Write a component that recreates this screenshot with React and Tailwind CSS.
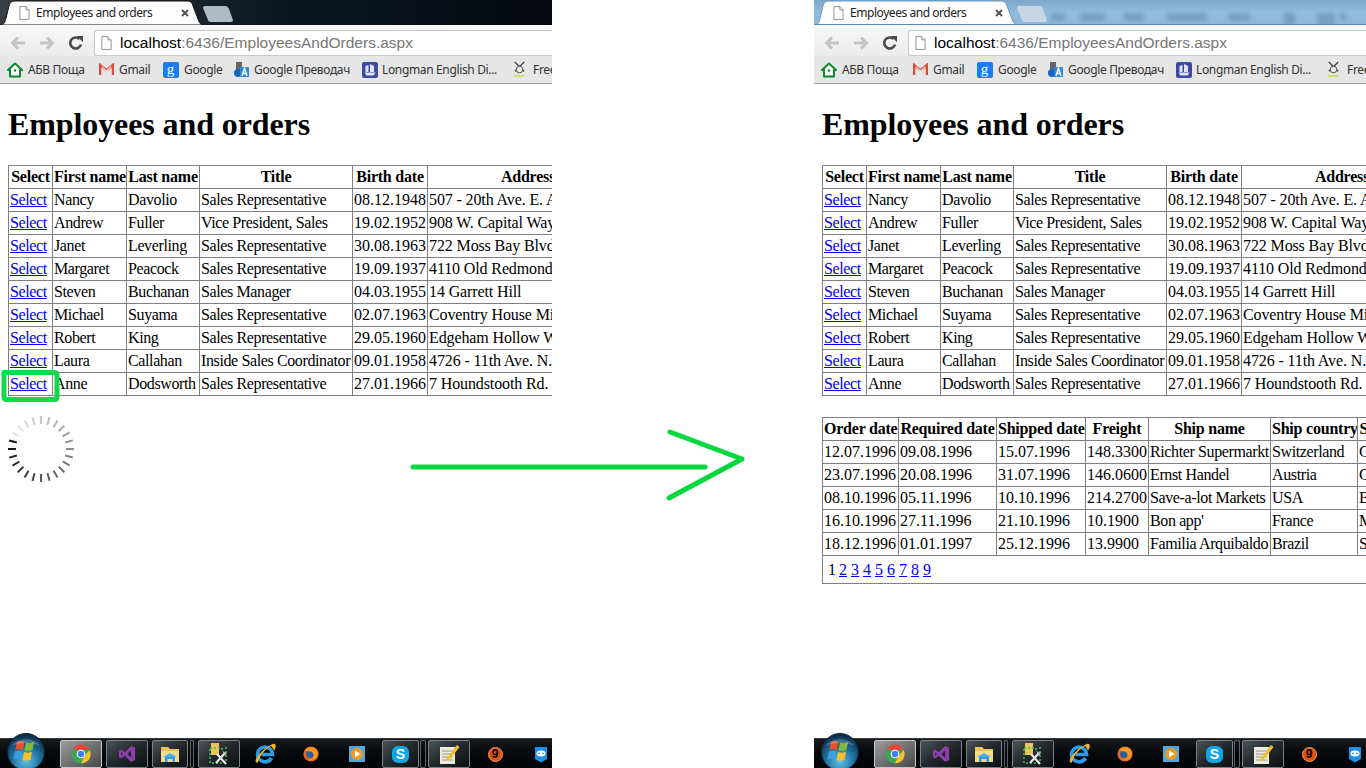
import React from "react";

const employees = [
  ["Nancy","Davolio","Sales Representative","08.12.1948","507 - 20th Ave. E. Apt. 2A"],
  ["Andrew","Fuller","Vice President, Sales","19.02.1952","908 W. Capital Way"],
  ["Janet","Leverling","Sales Representative","30.08.1963","722 Moss Bay Blvd."],
  ["Margaret","Peacock","Sales Representative","19.09.1937","4110 Old Redmond Rd."],
  ["Steven","Buchanan","Sales Manager","04.03.1955","14 Garrett Hill"],
  ["Michael","Suyama","Sales Representative","02.07.1963","Coventry House Miner Rd."],
  ["Robert","King","Sales Representative","29.05.1960","Edgeham Hollow Winchester Way"],
  ["Laura","Callahan","Inside Sales Coordinator","09.01.1958","4726 - 11th Ave. N.E."],
  ["Anne","Dodsworth","Sales Representative","27.01.1966","7 Houndstooth Rd."],
];

const orders = [
  ["12.07.1996","09.08.1996","15.07.1996","148.3300","Richter Supermarkt","Switzerland","Genève"],
  ["23.07.1996","20.08.1996","31.07.1996","146.0600","Ernst Handel","Austria","Graz"],
  ["08.10.1996","05.11.1996","10.10.1996","214.2700","Save-a-lot Markets","USA","Boise"],
  ["16.10.1996","27.11.1996","21.10.1996","10.1900","Bon app'","France","Marseille"],
  ["18.12.1996","01.01.1997","25.12.1996","13.9900","Familia Arquibaldo","Brazil","Sao Paulo"],
];

const thc = "border border-[#808080] px-px py-0 font-bold text-center whitespace-nowrap overflow-hidden h-[23px] tracking-[-0.22px]";
const tdc = "border border-[#808080] px-px py-0 text-left whitespace-nowrap overflow-hidden h-[23px] tracking-[-0.38px]";
const tda = "border border-[#808080] px-px py-0 text-left whitespace-nowrap overflow-hidden h-[23px] tracking-[-0.12px]";
const tdn = "border border-[#808080] px-px py-0 text-left whitespace-nowrap overflow-hidden h-[23px]";
const isNum = (s) => /^[\d.]+$/.test(s);

function DocIcon({ className }) {
  return (
    <svg viewBox="0 0 12 15" className={className}>
      <path d="M1 .5h6.5L11 4v10.5H1z" fill="#fff" stroke="#8a8a8a" />
      <path d="M7.5.5V4H11" fill="#eee" stroke="#8a8a8a" />
    </svg>
  );
}

function Tab({ blue }) {
  return (
    <div className="relative w-[204px] h-[25px] shrink-0">
      <svg viewBox="0 0 204 25" className="absolute inset-0 w-[204px] h-[25px]">
        <path d="M0 25C4 25 5 22 6 18L9 6C10 2 12 1 16 1H186C190 1 192 2 193 6L198 19C199 23 201 25 204 25Z" fill="#fdfdfd" stroke={blue ? "#6f94b3" : "#111"} strokeWidth="1" />
      </svg>
      <div className="relative flex items-center h-[25px] pl-[19px]">
        <DocIcon className="w-[11px] h-[14px]" />
        <span className="ml-[6px] text-[12px] tracking-[-0.45px] text-[#222] font-['Noto_Sans',sans-serif] whitespace-nowrap">Employees and orders</span>
        <svg viewBox="0 0 8 8" className="absolute left-[181px] top-[9px] w-[8px] h-[8px]">
          <path d="M1 1l6 6M7 1l-6 6" stroke="#555" strokeWidth="2" />
        </svg>
      </div>
    </div>
  );
}

function NewTab({ blue }) {
  return (
    <svg viewBox="0 0 30 16" className="w-[30px] h-[16px] mt-[6px] ml-[-1px] shrink-0">
      <path d="M2 0H22C24 0 25 1 26 3L30 14C30 15 29 16 28 16H8C6 16 5 15 5 14L0 2C0 1 1 0 2 0Z" fill={blue ? "#c7d6e4" : "#aebac6"} />
    </svg>
  );
}

function Strip({ blue }) {
  if (blue) {
    const blobs = [
      ["w-[14px]", "ml-[4px]"], ["w-[25px]", "ml-[15px]"], ["w-[20px]", "ml-[19px]"],
      ["w-[40px]", "ml-[23px]"], ["w-[21px]", "ml-[22px]"], ["w-[11px] h-[12px]", "ml-[34px]"],
      ["w-[18px] h-[14px]", "ml-[22px]"], ["w-[6px]", "ml-[5px]"],
    ];
    return (
      <div className="flex h-[25px] items-start bg-gradient-to-b from-[#7ba7c9] via-[#92bcdd] to-[#8db8da] border-b border-[#5f89ab] overflow-hidden">
        <Tab blue />
        <NewTab blue />
        {blobs.map(([w, m], i) => (
          <div key={i} className={`${w} ${m} h-[8px] mt-[13px] bg-[#4f7a9c] opacity-40 blur-[2px] shrink-0`} />
        ))}
      </div>
    );
  }
  return (
    <div className="flex h-[25px] items-start bg-gradient-to-r from-[#3a3f44] via-[#0c1722] to-[#05090e] overflow-hidden">
      <Tab />
      <NewTab />
    </div>
  );
}

function Toolbar() {
  return (
    <div className="flex items-center h-[31px] pt-[4px] bg-gradient-to-b from-[#f8f8f8] to-[#ececec]">
      <svg viewBox="0 0 16 14" className="w-[16px] h-[14px] ml-[10px] shrink-0">
        <path d="M8 1.5L2.5 7 8 12.5M3 7h12" fill="none" stroke="#c4c4c4" strokeWidth="3" />
      </svg>
      <svg viewBox="0 0 16 14" className="w-[16px] h-[14px] ml-[13px] shrink-0">
        <path d="M8 1.5L13.5 7 8 12.5M13 7H1" fill="none" stroke="#c4c4c4" strokeWidth="3" />
      </svg>
      <svg viewBox="0 0 16 16" className="w-[16px] h-[16px] ml-[13px] shrink-0">
        <path d="M13 9.5A5.5 5.5 0 1 1 11.5 4" fill="none" stroke="#4a4a4a" strokeWidth="2.6" />
        <path d="M9 1H15V7.2Z" fill="#4a4a4a" />
      </svg>
      <div className="flex items-center flex-1 ml-[10px] h-[26px] bg-white border border-[#c9c9c9] border-r-0 rounded-l-[3px] overflow-hidden">
        <DocIcon className="w-[11px] h-[14px] ml-[6px] shrink-0" />
        <span className="ml-[8px] text-[15.5px] font-['Liberation_Sans',sans-serif] whitespace-nowrap text-[#777]"><span className="text-black">localhost</span>:6436/EmployeesAndOrders.aspx</span>
      </div>
    </div>
  );
}

const icons = {
  home: (
    <svg viewBox="0 0 16 16" className="w-[16px] h-[16px]">
      <path d="M8 1.5L15 8h-2v6.5H3V8H1z" fill="#fff" stroke="#0a8a2a" strokeWidth="2" strokeLinejoin="round" />
      <circle cx="8" cy="8.5" r="1.2" fill="#0a8a2a" />
    </svg>
  ),
  gmail: (
    <svg viewBox="0 0 16 14" className="w-[15px] h-[13px]">
      <path d="M1 13V2l7 6 7-6v11" fill="none" stroke="#dd4b39" strokeWidth="2.6" />
      <path d="M3 3l5 5 5-5v1l-5 6-5-6z" fill="#f1f1f1" />
    </svg>
  ),
  google: (
    <div className="w-[16px] h-[16px] bg-[#1a7cf0] rounded-[2px] flex items-center justify-center text-white text-[15px] leading-none font-['Liberation_Serif',serif]">g</div>
  ),
  translate: (
    <svg viewBox="0 0 17 17" className="w-[17px] h-[17px]">
      <path d="M3 1h6v8H3z" fill="#666" />
      <circle cx="5" cy="12" r="4" fill="#1565c0" />
      <path d="M7 6h9v10H7z" fill="#2a8bdc" />
      <path d="M9 15l2.5-8 2.5 8M10 12.5h3" fill="none" stroke="#fff" strokeWidth="1.4" />
    </svg>
  ),
  longman: (
    <svg viewBox="0 0 16 16" className="w-[16px] h-[16px]">
      <rect width="16" height="16" rx="2" fill="#3d4a9e" />
      <path d="M2.500 10.500h11l-2 3h-7zM3.500 4l3-1v7h-3zM8 2l4 2v6H8z" fill="#dfe3f4" />
    </svg>
  ),
  free: (
    <svg viewBox="0 0 16 18" className="w-[15px] h-[17px]">
      <path d="M3 1l10 10M13 1L3 11" stroke="#444" strokeWidth="1.5" />
      <circle cx="8" cy="9" r="3.5" fill="#eee" stroke="#444" />
      <path d="M2 16h11" stroke="#c8d830" strokeWidth="1.5" />
    </svg>
  ),
};

function Bookmark({ icon, label, width, gap }) {
  return (
    <div className={`flex items-center shrink-0 ${width}`}>
      <div className="w-[17px] flex justify-center shrink-0">{icons[icon]}</div>
      <span className={`${gap} text-[12px] tracking-[-0.35px] text-[#333] font-['Noto_Sans',sans-serif] whitespace-nowrap`}>{label}</span>
    </div>
  );
}

function Bookmarks() {
  return (
    <div className="flex items-center h-[28px] pl-[6px] bg-[#e6e6e6] border-b border-[#a3a3a3] overflow-hidden">
      <Bookmark icon="home" label="АБВ Поща" width="w-[92px]" gap="ml-[5px]" />
      <Bookmark icon="gmail" label="Gmail" width="w-[64px]" gap="ml-[4px]" />
      <Bookmark icon="google" label="Google" width="w-[71px]" gap="ml-[5px]" />
      <Bookmark icon="translate" label="Google Преводач" width="w-[128px]" gap="ml-[4px]" />
      <Bookmark icon="longman" label="Longman English Di..." width="w-[150px]" gap="ml-[4px]" />
      <Bookmark icon="free" label="Free" width="w-[60px]" gap="ml-[5px]" />
    </div>
  );
}

function EmployeesTable() {
  return (
    <table className="table-fixed border-collapse ml-2 w-[620px] text-[16px] leading-[18px]">
      <colgroup>
        <col className="w-[44px]" />
        <col className="w-[74px]" />
        <col className="w-[73px]" />
        <col className="w-[153px]" />
        <col className="w-[75px]" />
        <col className="w-[201px]" />
      </colgroup>
      <thead>
        <tr>
          {["Select","First name","Last name","Title","Birth date","Address"].map((h) => (
            <th key={h} className={thc}>{h}</th>
          ))}
        </tr>
      </thead>
      <tbody>
        {employees.map((r) => (
          <tr key={r[0]}>
            <td className={tdc}><a href="#" className="text-[#0000ee] underline">Select</a></td>
            {r.map((c, i) => (<td key={i} className={i === 4 ? tda : isNum(c) ? tdn : tdc}>{c}</td>))}
          </tr>
        ))}
      </tbody>
    </table>
  );
}

function OrdersTable() {
  return (
    <table className="table-fixed border-collapse ml-2 mt-[21px] w-[597px] text-[16px] leading-[18px]">
      <colgroup>
        <col className="w-[76px]" />
        <col className="w-[98px]" />
        <col className="w-[89px]" />
        <col className="w-[63px]" />
        <col className="w-[122px]" />
        <col className="w-[87px]" />
        <col className="w-[62px]" />
      </colgroup>
      <thead>
        <tr>
          {["Order date","Required date","Shipped date","Freight","Ship name","Ship country","Ship city"].map((h) => (
            <th key={h} className={thc}>{h}</th>
          ))}
        </tr>
      </thead>
      <tbody>
        {orders.map((r) => (
          <tr key={r[0]}>
            {r.map((c, i) => (<td key={i} className={isNum(c) ? tdn : tdc}>{c}</td>))}
          </tr>
        ))}
        <tr>
          <td colSpan={7} className="border border-[#808080] h-[28px] p-0">
            <div className="flex gap-1 pl-[5px]">
              <span className="mr-[-1px]">1</span>
              {["2","3","4","5","6","7","8","9"].map((n) => (
                <a key={n} href="#" className="text-[#0000ee] underline">{n}</a>
              ))}
            </div>
          </td>
        </tr>
      </tbody>
    </table>
  );
}

function Spinner() {
  const ticks = Array.from({ length: 24 }, (_, i) => {
    const a = Math.PI - 0.26 + (i * 2 * Math.PI) / 24;
    const v = Math.round(Math.min(232, 15 + i * 9.5));
    const c = `rgb(${v},${v},${v})`;
    return (
      <line
        key={i}
        x1={33 + Math.cos(a) * 25}
        y1={33 - Math.sin(a) * 25}
        x2={33 + Math.cos(a) * 33}
        y2={33 - Math.sin(a) * 33}
        stroke={c}
        strokeWidth="2"
      />
    );
  });
  return (
    <svg viewBox="0 0 66 66" className="w-[66px] h-[66px] ml-2 mt-5 block">
      {ticks}
    </svg>
  );
}

function Orb() {
  return (
    <svg viewBox="0 0 38 38" className="absolute left-[7px] top-[-6px] w-[38px] h-[38px]">
      <defs>
        <radialGradient id="orbg" cx="50%" cy="75%" r="70%">
          <stop offset="0%" stopColor="#5fc3e8" />
          <stop offset="55%" stopColor="#1f6f9e" />
          <stop offset="100%" stopColor="#0c2f4a" />
        </radialGradient>
      </defs>
      <circle cx="19" cy="19" r="18.5" fill="url(#orbg)" stroke="#0a2233" />
      <path d="M10 9c3-1.500 5-1 7.500 0l-1.600 8c-2.500-1-4.500-1.300-7.500 0z" fill="#e8502a" />
      <path d="M19 9.500c2.500 1 5 1 8-.5l-1.500 8c-3 1.500-5 1.200-8 .2z" fill="#7fba3a" />
      <path d="M8 18.500c3-1.300 5-1 7.500 0l-1.500 8c-2.500-1-5-1.200-7.500 0z" fill="#3a9fe0" />
      <path d="M17 19c3 1 5 1.200 8-.3l-1.500 8c-3 1.500-5.500 1.300-8 .3z" fill="#f5c02a" />
      <path d="M5 13C9 4 29 4 33 13 25 9 13 9 5 13Z" fill="#fff" opacity="0.2" />
    </svg>
  );
}

const tb = {
  chrome: (
    <svg viewBox="0 0 20 20" className="w-[20px] h-[20px]">
      <circle cx="10" cy="10" r="9.5" fill="#3aa757" />
      <path d="M10 .5A9.500 9.500 0 0 1 18.700 6H10z" fill="#e8453c" />
      <path d="M1.800 5.200A9.500 9.500 0 0 1 10 .5V6H6z" fill="#e8453c" />
      <path d="M18.700 6A9.500 9.500 0 0 1 10 19.500L13.500 12z" fill="#fbc02d" />
      <circle cx="10" cy="10" r="4.300" fill="#fff" />
      <circle cx="10" cy="10" r="3.200" fill="#3f7fe8" />
    </svg>
  ),
  vs: (
    <svg viewBox="0 0 20 20" className="w-[18px] h-[18px]">
      <path d="M14.500 1L19 3v14l-4.500 2L7.500 12l-4 3L1 13.500v-7L3.500 5l4 3zM14.500 6l-4 4 4 4zM3.500 8v4l2-2z" fill="#8a3fa8" />
    </svg>
  ),
  explorer: (
    <svg viewBox="0 0 20 20" className="w-[20px] h-[20px]">
      <path d="M1 3h7l2 2h9v13H1z" fill="#e8c45a" />
      <path d="M1 7h18v11H1z" fill="#f5dc8c" />
      <path d="M5 18v-5h10v5h-2.500v-3h-5v3z" fill="#2f9be0" />
      <path d="M3 13l7-4 7 4z" fill="#4ab0ea" />
    </svg>
  ),
  tools: (
    <svg viewBox="0 0 24 24" className="w-[24px] h-[24px]">
      <path d="M4 1h8v12H4z" fill="#e8c45a" />
      <path d="M3 6h12v2M19 5v16H3V6" fill="none" stroke="#3cc24a" strokeWidth="1.500" strokeDasharray="2 2" />
      <path d="M10 12l9 10M18 11L9 21" stroke="#e8e8e8" strokeWidth="2.200" />
      <path d="M15 9l5 2-2 3z" fill="#bbb" />
    </svg>
  ),
  ie: (
    <svg viewBox="0 0 24 24" className="w-[24px] h-[24px]">
      <path d="M4.500 12.500a7.500 7.500 0 0 1 15 0H8.500m-4 0a7.500 7.500 0 0 0 14 3.500" fill="none" stroke="#2b9be8" strokeWidth="3.600" />
      <path d="M3 20C1 17 10 6 20 2c4-1 3 4 1 7-1-3-2-4-3-5C12 7 6 15 5 20c0 1-1 1-2 0z" fill="#f2b52a" />
    </svg>
  ),
  firefox: (
    <svg viewBox="0 0 20 20" className="w-[16px] h-[16px]">
      <circle cx="10" cy="10" r="9.500" fill="#e8661f" />
      <circle cx="9" cy="10" r="5" fill="#2c5f9e" />
      <path d="M3 5c3-5 13-5 16 3-2 9-8 11-13 9 5 1 8-3 7-7-1-3-4-4-6-3C5 6 3 6 3 5z" fill="#f59a23" />
    </svg>
  ),
  player: (
    <svg viewBox="0 0 16 16" className="w-[16px] h-[16px]">
      <rect width="16" height="16" fill="#4fa8dc" />
      <circle cx="8" cy="8" r="6" fill="#f29a1f" />
      <path d="M6 4.500v7l5.500-3.500z" fill="#fff" />
    </svg>
  ),
  teamviewer: (
    <svg viewBox="0 0 14 17" className="w-[14px] h-[17px]">
      <path d="M1 1h12v12l-6 3.500L1 13z" fill="#1e90e8" />
      <ellipse cx="7" cy="7.500" rx="4.500" ry="3" fill="#fff" />
      <path d="M3.500 7.500l2-1.300v2.600zM10.500 7.500l-2-1.300v2.600z" fill="#1e90e8" />
    </svg>
  ),
  notepad: (
    <svg viewBox="0 0 22 22" className="w-[22px] h-[22px]">
      <path d="M2 4h15v17H2z" fill="#ecebdf" />
      <path d="M4 8h11M4 11h11M4 14h11M4 17h11" stroke="#9a9a8a" />
      <path d="M9 15l10-13 2.500 2-10 13-3.500 1z" fill="#f0c030" />
    </svg>
  ),
};

function TaskBtn({ children, wide }) {
  return (
    <div className={`${wide ? "w-[42px] bg-gradient-to-br from-[#9c9c9c] to-[#4a4a4a] border-[#c8c8c8]" : "w-[42px] bg-gradient-to-br from-[#4c5358] via-[#22282c] to-[#0c1012] border-[#7b8186]"} h-[28px] mt-[1px] mr-[4px] border rounded-[2px] flex items-center justify-center shrink-0`}>
      {children}
    </div>
  );
}

function Slot({ children, pull }) {
  return <div className={`${pull ? "ml-[-2px]" : ""} w-[46px] h-[30px] flex items-center justify-center shrink-0`}>{children}</div>;
}

function Sep() {
  return <div className="w-[4px] h-[28px] mt-[1px] mr-[4px] border border-[#5c6165] rounded-[1px] shrink-0" />;
}

function Taskbar() {
  return (
    <div className="relative h-[30px] shrink-0 bg-gradient-to-b from-[#17191b] via-[#06090c] to-[#020406] border-t border-[#30363a] flex items-start pl-[60px] overflow-visible">
      <Orb />
      <TaskBtn wide>{tb.chrome}</TaskBtn>
      <TaskBtn>{tb.vs}</TaskBtn>
      <div className="w-[36px] h-[28px] mt-[1px] mr-[2px] border border-[#7b8186] rounded-[2px] bg-gradient-to-br from-[#4c5358] via-[#22282c] to-[#0c1012] flex items-center justify-center shrink-0">{tb.explorer}</div>
      <Sep />
      <TaskBtn>{tb.tools}</TaskBtn>
      <Slot pull>{tb.ie}</Slot>
      <Slot>{tb.firefox}</Slot>
      <Slot>{tb.player}</Slot>
      <div className="w-[37px] h-[28px] mt-[1px] mr-[1px] ml-[2px] border border-[#7b8186] rounded-[2px] bg-gradient-to-br from-[#4c5358] via-[#22282c] to-[#0c1012] flex items-center justify-center shrink-0">
        <div className="w-[17px] h-[17px] rounded-[6px] bg-[#12a5e8] flex items-center justify-center text-white text-[14px] font-bold leading-none font-['Liberation_Sans',sans-serif]">S</div>
      </div>
      <div className="w-[6px] h-[28px] mt-[1px] mr-[2px] border border-[#5c6165] rounded-[1px] shrink-0" />
      <TaskBtn>{tb.notepad}</TaskBtn>
      <Slot pull>
        <div className="w-[15px] h-[15px] rounded-full bg-[#e2500f] border border-[#f59a5a] flex items-center justify-center text-black text-[12px] font-bold leading-none font-['Liberation_Sans',sans-serif]">9</div>
      </Slot>
      <Slot>{tb.teamviewer}</Slot>
    </div>
  );
}

function Panel({ blue, children }) {
  return (
    <div className="relative w-[552px] h-[768px] flex flex-col overflow-hidden bg-white shrink-0">
      <Strip blue={blue} />
      <Toolbar />
      <Bookmarks />
      <div className="flex-1 overflow-hidden pt-[2px] font-['Liberation_Serif',serif] text-[16px] text-black">
        <h1 className="text-[32px] font-bold mt-[20px] mb-[22px] ml-2 leading-[37px] tracking-[-0.1px] whitespace-nowrap">Employees and orders</h1>
        <EmployeesTable />
        {children}
      </div>
      <Taskbar />
    </div>
  );
}

export default function App() {
  return (
    <div className="relative flex justify-between w-[1366px] h-[768px] bg-white overflow-hidden">
      <Panel>
        <Spinner />
        <svg viewBox="0 0 60 34" className="absolute left-0 top-[370px] w-[60px] h-[34px] blur-[0.4px]">
          <path d="M4 2.500H54C56 2.500 57 3.500 57 5.500V27C57 28.500 56 29.500 54.500 29.500H7C5 29.500 4 28.500 4 26.500Z" fill="none" stroke="#12d94a" strokeWidth="5" strokeLinejoin="round" />
        </svg>
      </Panel>
      <Panel blue>
        <OrdersTable />
      </Panel>
      <svg viewBox="0 0 350 90" className="absolute left-[400px] top-[420px] w-[350px] h-[90px] blur-[0.4px]">
        <path d="M13 47H305M270 12L342 39 269 78" fill="none" stroke="#05d83f" strokeWidth="5" strokeLinecap="round" strokeLinejoin="round" />
      </svg>
    </div>
  );
}
